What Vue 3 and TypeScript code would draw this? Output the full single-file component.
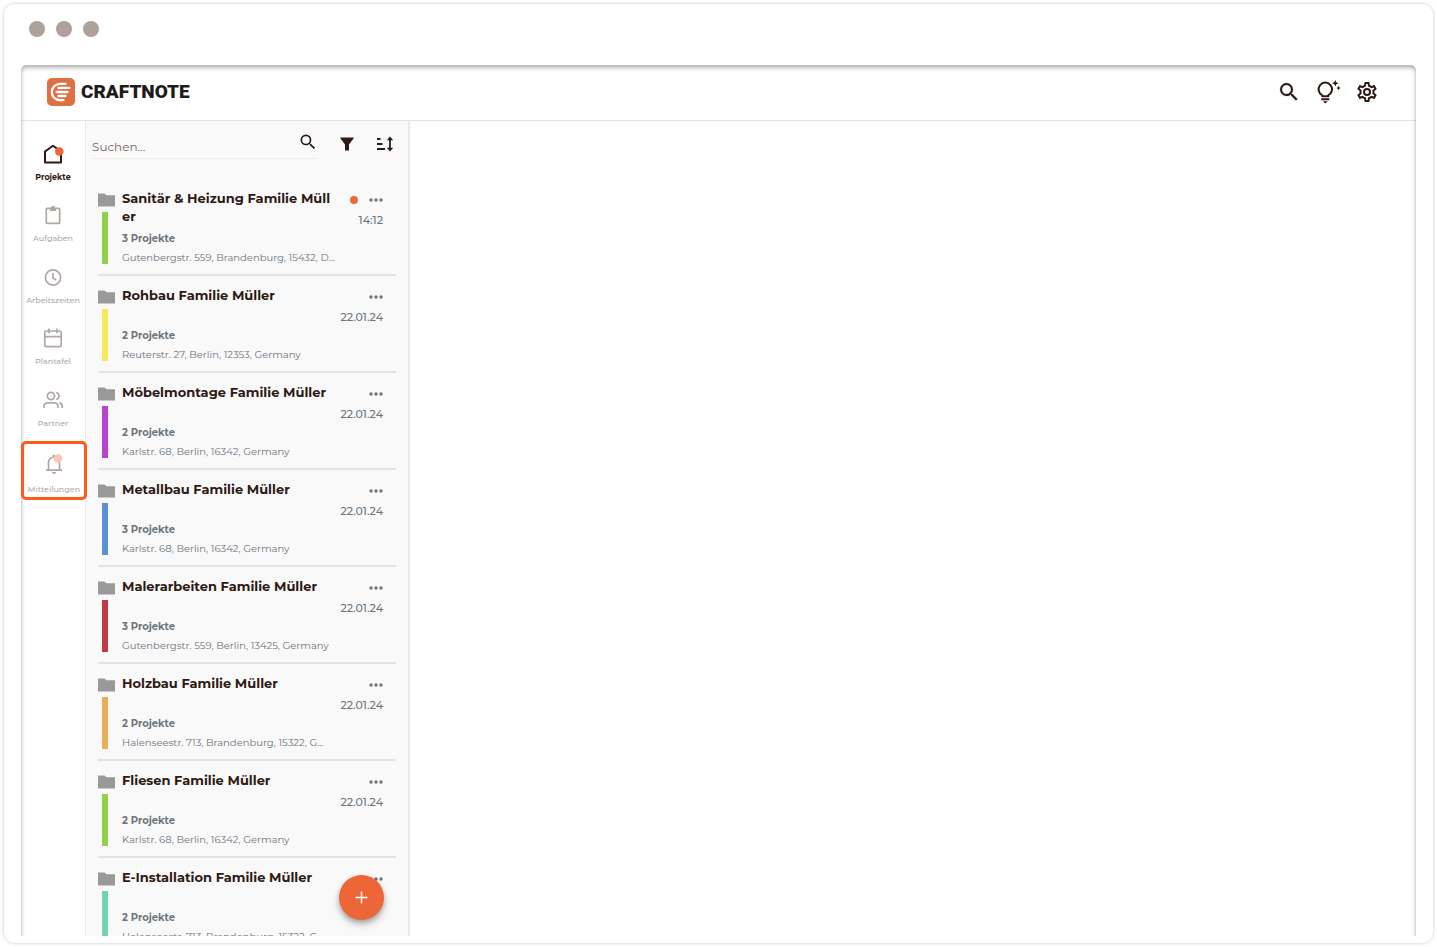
<script setup lang="ts">
import { ref } from 'vue'

interface NavItem { id: string; label: string; active?: boolean; badge?: boolean; highlight?: boolean }
interface Project { title: string; count: number; address: string; time: string; color: string; unread?: boolean }

const query = ref('')

const nav: NavItem[] = [
  { id: 'home', label: 'Projekte', active: true, badge: true },
  { id: 'tasks', label: 'Aufgaben' },
  { id: 'time', label: 'Arbeitszeiten' },
  { id: 'board', label: 'Plantafel' },
  { id: 'partner', label: 'Partner' },
  { id: 'bell', label: 'Mitteilungen', badge: true, highlight: true },
]

const projects: Project[] = [
  { title: 'Sanitär & Heizung Familie Müll\ner', count: 3, address: 'Gutenbergstr. 559, Brandenburg, 15432, D...', time: '14:12', color: '#92d14b', unread: true },
  { title: 'Rohbau Familie Müller', count: 2, address: 'Reuterstr. 27, Berlin, 12353, Germany', time: '22.01.24', color: '#f6e95c' },
  { title: 'Möbelmontage Familie Müller', count: 2, address: 'Karlstr. 68, Berlin, 16342, Germany', time: '22.01.24', color: '#b844d0' },
  { title: 'Metallbau Familie Müller', count: 3, address: 'Karlstr. 68, Berlin, 16342, Germany', time: '22.01.24', color: '#5b8fd8' },
  { title: 'Malerarbeiten Familie Müller', count: 3, address: 'Gutenbergstr. 559, Berlin, 13425, Germany', time: '22.01.24', color: '#bf3b48' },
  { title: 'Holzbau Familie Müller', count: 2, address: 'Halenseestr. 713, Brandenburg, 15322, G...', time: '22.01.24', color: '#e9ae56' },
  { title: 'Fliesen Familie Müller', count: 2, address: 'Karlstr. 68, Berlin, 16342, Germany', time: '22.01.24', color: '#92d14b' },
  { title: 'E-Installation Familie Müller', count: 2, address: 'Halenseestr. 713, Brandenburg, 15322, G...', time: '22.01.24', color: '#72d3b5' },
]
</script>

<template>
  <div class="window">
    <div class="lights"><span></span><span></span><span></span></div>
    <div class="app">
      <header class="topbar">
        <a href="#" class="brand">
          <svg width="28" height="28" viewBox="0 0 28 28" aria-hidden="true">
            <rect width="28" height="28" rx="5" fill="#df7043" />
            <g fill="none" stroke="#fff" stroke-width="2.300" stroke-linecap="round">
              <path d="M18.500 5.800H13A8.200 8.200 0 0 0 13 22.200H16.500" />
              <path d="M11.500 9.800H22.500M9.500 14H20.500M11.500 18H18.500" />
            </g>
          </svg>
          <span>CRAFTNOTE</span>
        </a>
        <div class="tools">
          <button type="button" aria-label="Suche">
            <svg width="24" height="24" viewBox="0 0 24 24" fill="currentColor" stroke="currentColor" stroke-width=".2"><path d="M15.500 14h-.79l-.28-.27A6.470 6.470 0 0 0 16 9.500 6.500 6.500 0 1 0 9.500 16c1.610 0 3.090-.59 4.230-1.570l.27.28v.79l5 4.990L20.490 19l-4.990-5zm-6 0a4.500 4.500 0 1 1 0-9 4.500 4.500 0 0 1 0 9z" /></svg>
          </button>
          <button type="button" aria-label="Neuigkeiten">
            <svg width="24" height="24" viewBox="0 0 24 24" fill="none" stroke="currentColor" stroke-width="2">
              <path d="M6.300 16.200V15.300A6.700 6.700 0 1 1 12.300 15.300V16.200Z" stroke-linejoin="round" />
              <path d="M5.300 19.300h8" /><path d="M6.800 21.200h5l-2.500 2.300z" fill="currentColor" stroke="none" />
              <path d="M19.300 0l1 2.200 2.200 1-2.200 1-1 2.200-1-2.200-2.200-1 2.200-1zM22.500 5.800l.7 1.500 1.500.7-1.500.7-.7 1.500-.7-1.500-1.500-.7 1.500-.7z" fill="currentColor" stroke="none" />
            </svg>
          </button>
          <button type="button" aria-label="Einstellungen">
            <svg width="24" height="24" viewBox="0 0 24 24" fill="currentColor"><path d="M19.430 12.980c.04-.32.07-.64.07-.98s-.03-.66-.07-.98l2.110-1.650c.19-.15.24-.42.12-.64l-2-3.460c-.12-.22-.39-.3-.61-.22l-2.490 1c-.52-.4-1.080-.73-1.690-.98l-.38-2.650A.49.49 0 0 0 14 2h-4c-.25 0-.46.18-.49.42l-.38 2.650c-.61.25-1.170.59-1.690.98l-2.490-1c-.23-.09-.49 0-.61.22l-2 3.460c-.13.22-.07.49.12.64l2.110 1.650c-.04.32-.07.65-.07.98s.03.66.07.98l-2.110 1.650c-.19.15-.24.42-.12.64l2 3.460c.12.22.39.3.61.22l2.490-1c.52.4 1.080.73 1.690.98l.38 2.650c.03.24.24.42.49.42h4c.25 0 .46-.18.49-.42l.38-2.650c.61-.25 1.170-.59 1.690-.98l2.490 1c.23.09.49 0 .61-.22l2-3.460c.12-.22.07-.49-.12-.64l-2.110-1.650zm-1.980-1.710c.04.31.05.52.05.73s-.02.43-.05.73l-.14 1.130.89.7 1.080.84-.7 1.210-1.270-.51-1.040-.42-.9.68c-.43.32-.84.56-1.250.73l-1.060.43-.16 1.130-.2 1.350h-1.400l-.19-1.350-.16-1.130-1.060-.43c-.43-.18-.83-.41-1.230-.71l-.91-.7-1.060.43-1.270.51-.7-1.210 1.080-.84.89-.7-.14-1.130c-.03-.31-.05-.54-.05-.74s.02-.43.05-.73l.14-1.130-.89-.7-1.080-.84.7-1.210 1.270.51 1.040.42.9-.68c.43-.32.84-.56 1.250-.73l1.060-.43.16-1.130.2-1.350h1.390l.19 1.350.16 1.130 1.060.43c.43.18.83.41 1.230.71l.91.7 1.060-.43 1.270-.51.7 1.210-1.070.85-.89.7.14 1.130zM12 8a4 4 0 1 0 0 8 4 4 0 0 0 0-8zm0 6a2 2 0 1 1 0-4 2 2 0 0 1 0 4z" /></svg>
          </button>
        </div>
      </header>

      <div class="body">
        <nav class="side">
          <a v-for="n in nav" :key="n.id" href="#" class="nav-item" :class="{ active: n.active, highlight: n.highlight }">
            <svg width="20" height="20" viewBox="0 0 20 20" fill="none" stroke="currentColor" stroke-width="1.700" stroke-linejoin="round" aria-hidden="true">
              <path v-if="n.id === 'home'" d="M2 18.500V7.500L10 1.800 18 7.500V18.500Z" stroke-width="2" />
              <template v-else-if="n.id === 'tasks'">
                <rect x="3.300" y="3.300" width="13.400" height="15" rx="1" />
                <path d="M7 3h6v3H7z" fill="currentColor" stroke="none" /><circle cx="10" cy="3" r="1.300" fill="currentColor" />
              </template>
              <template v-else-if="n.id === 'time'">
                <circle cx="10" cy="10.500" r="7.600" /><path d="M10 6V11L13.300 13.100" />
              </template>
              <template v-else-if="n.id === 'board'">
                <rect x="1.800" y="3" width="16.400" height="15.600" rx="1.300" /><path d="M1.800 8.600H18.200M6 .5V5.200M14 .5V5.200" />
              </template>
              <template v-else-if="n.id === 'partner'">
                <circle cx="8" cy="6" r="3.600" /><path d="M1 18V16.300A3.500 3.500 0 0 1 4.500 12.800H11.500A3.500 3.500 0 0 1 15 16.300V18M13.200 2.500A3.600 3.600 0 0 1 13.200 9.500M16.500 12.900A3.500 3.500 0 0 1 19.200 16.300V18" />
              </template>
              <template v-else>
                <path d="M2 16.200H18M4.500 16V8.500A5.500 5.500 0 0 1 15.500 8.500V16" /><path d="M10 .8V3" stroke-width="2.500" /><path d="M8 18h4a2 2 0 0 1-4 0z" fill="currentColor" stroke="none" />
              </template>
              <circle v-if="n.id === 'home'" cx="16.300" cy="7.500" r="4.300" fill="#ee6636" stroke="none" />
              <circle v-else-if="n.badge" cx="14" cy="4.500" r="4.300" fill="#f8c7b6" stroke="none" />
            </svg>
            <span>{{ n.label }}</span>
          </a>
        </nav>

        <section class="panel">
          <div class="filters">
            <label class="search">
              <input v-model="query" type="text" placeholder="Suchen..." aria-label="Suchen" />
              <svg width="20" height="20" viewBox="0 0 24 24" fill="currentColor" aria-hidden="true"><path d="M15.500 14h-.79l-.28-.27A6.470 6.470 0 0 0 16 9.500 6.500 6.500 0 1 0 9.500 16c1.610 0 3.090-.59 4.230-1.570l.27.28v.79l5 4.990L20.490 19l-4.990-5zm-6 0a4.500 4.500 0 1 1 0-9 4.500 4.500 0 0 1 0 9z" /></svg>
            </label>
            <button type="button" aria-label="Filter">
              <svg width="14" height="14" viewBox="0 0 14 14" fill="currentColor"><path d="M.8.500H13.200Q14 .5 13.700 1.300L9 7.500V13.500H5V7.500L.3 1.300Q0 .5.800.500Z" /></svg>
            </button>
            <button type="button" aria-label="Sortieren">
              <svg width="18" height="16" viewBox="0 0 18 16" fill="none" stroke="currentColor" stroke-width="1.800"><path d="M1 3H4.500M1 8H6.500M1 13H9M14 3V13" /><path d="M14 .5L17.200 4.300H10.800ZM14 15.500L17.200 11.700H10.800Z" fill="currentColor" stroke="none" /></svg>
            </button>
          </div>

          <ul class="list">
            <li v-for="p in projects" :key="p.title" class="item">
              <div class="mark">
                <svg width="17" height="14" viewBox="0 0 17 14" aria-hidden="true"><path d="M0 .5H6.500L8.500 2.300H17V13.500H0Z" fill="#999" /></svg>
                <span class="bar" :style="{ background: p.color }"></span>
              </div>
              <div class="info">
                <h3>{{ p.title }}</h3>
                <p class="count">{{ p.count }} Projekte</p>
                <p class="address">{{ p.address }}</p>
              </div>
              <div class="meta">
                <div class="actions">
                  <span v-if="p.unread" class="unread"></span>
                  <button type="button" aria-label="Mehr"><svg width="14" height="4" viewBox="0 0 14 4" fill="#6c757d"><circle cx="2" cy="2" r="1.700" /><circle cx="7" cy="2" r="1.700" /><circle cx="12" cy="2" r="1.700" /></svg></button>
                </div>
                <time>{{ p.time }}</time>
              </div>
            </li>
          </ul>
          <button type="button" class="fab" aria-label="Neues Projekt">
            <svg width="13" height="13" viewBox="0 0 13 13" stroke="#fff" stroke-width="1.500"><path d="M6.500 .5V12.500M.5 6.500H12.500" /></svg>
          </button>
        </section>
        <main class="content"></main>
      </div>
    </div>
  </div>
</template>

<style>
body { background: #fff; }
#app { height: 100vh; padding: 3px; box-sizing: border-box; }
</style>

<style scoped>
* { box-sizing: border-box; }
.window {
  height: 100%;
  display: flex;
  flex-direction: column;
  padding: 0 17px 7px;
  border: 1px solid #e8e8e8;
  border-radius: 12px;
  box-shadow: 0 0 3px rgba(0, 0, 0, 0.12);
  font-family: Montserrat, Inter, sans-serif;
  color: #2e1a14;
}
.lights { flex: 0 0 61px; display: flex; gap: 11px; padding: 17px 0 0 8px; }
.lights span { width: 16px; height: 16px; border-radius: 50%; background: #afa09b; }
.app {
  flex: 1;
  min-height: 0;
  display: flex;
  flex-direction: column;
  position: relative;
  overflow: hidden;
  border-radius: 5px 5px 0 0;
}
.app::after {
  content: "";
  position: absolute;
  inset: 0 0 -10px;
  border-radius: 5px;
  box-shadow: inset 0 3px 4px rgba(0, 0, 0, 0.28), inset 0 0 3px rgba(0, 0, 0, 0.12);
  pointer-events: none;
}
button { border: 0; padding: 0; background: none; color: inherit; display: flex; align-items: center; justify-content: center; cursor: pointer; }
a { color: inherit; text-decoration: none; }
svg { display: block; overflow: visible; flex: none; }
.topbar {
  flex: 0 0 56px;
  display: flex;
  align-items: center;
  justify-content: space-between;
  padding: 0 37px 2px 26px;
  border-bottom: 1px solid #e4e4e4;
}
.brand { display: flex; align-items: center; gap: 6px; color: #1e1b1c; font: 900 19px/28px Roboto, sans-serif; }
.tools { display: flex; gap: 15px; }
.body { flex: 1; min-height: 0; display: flex; }
.side { flex: 0 0 64px; min-width: 0; padding-top: 13px; display: flex; flex-direction: column; }
.nav-item {
  height: 61px;
  padding-top: 10px;
  display: flex;
  flex-direction: column;
  align-items: center;
  gap: 7px;
  color: #b0a7a4;
  font-size: 8px;
  font-weight: 500;
  line-height: 12px;
}
.nav-item:nth-child(even) { height: 62px; }
.nav-item.active { color: #2e1a14; font-weight: 700; }
.nav-item.highlight {
  position: relative;
  z-index: 1;
  width: 66px;
  height: 59px;
  gap: 9px;
  border: 3px solid #fc5a1e;
  border-radius: 5px;
}
.panel {
  flex: 0 0 325px;
  position: relative;
  overflow: hidden;
  background: #f9f9f9;
  border-left: 1px solid #e9e9e9;
  border-right: 2px solid #e9e9e9;
}
.filters { height: 58px; display: flex; align-items: center; padding: 0 13px 12px 6px; }
.search { width: 226px; height: 38px; margin-right: 22px; align-self: flex-start; display: flex; border-bottom: 1px solid #ececec; }
.search input {
  flex: 1;
  min-width: 0;
  padding: 14px 0 0;
  border: 0;
  outline: 0;
  background: none;
  font: 12px/20px Montserrat, Inter, sans-serif;
  color: #2e1a14;
}
.search input::placeholder { color: #7a6a63; opacity: 1; }
.search svg { margin-top: 11px; }
.filters > button + button { margin-left: 22px; }
.list { list-style: none; margin: 0; padding: 0 12px; }
.item { height: 97px; display: flex; border-bottom: 2px solid #e3e3e3; }
.mark { width: 24px; padding-top: 14px; }
.bar { display: block; width: 6px; height: 52px; margin: 5px 0 0 4px; }
.info { flex: 1; min-width: 0; padding-top: 10px; white-space: nowrap; color: #6c757d; }
.info h3 { margin: 0 0 4px; min-height: 36px; font-size: 13px; line-height: 18px; font-weight: 700; color: #2e1a14; white-space: pre; }
.info p { margin: 0; font-size: 10px; line-height: 19px; }
.info .count { font-weight: 700; }
.meta { padding: 12px 13px 0 0; display: flex; flex-direction: column; align-items: flex-end; color: #6c757d; }
.actions { height: 18px; display: flex; align-items: center; gap: 11px; }
.unread { width: 8px; height: 8px; border-radius: 50%; background: #ee6636; }
.meta time { font-size: 11px; font-weight: 500; line-height: 22px; }
.fab {
  position: absolute;
  right: 24px;
  bottom: 16px;
  width: 45px;
  height: 45px;
  border-radius: 50%;
  background: #ec6637;
  box-shadow: 0 3px 5px rgba(0, 0, 0, 0.25), 0 5px 10px rgba(0, 0, 0, 0.14);
}
.content { flex: 1; min-width: 0; }
</style>
